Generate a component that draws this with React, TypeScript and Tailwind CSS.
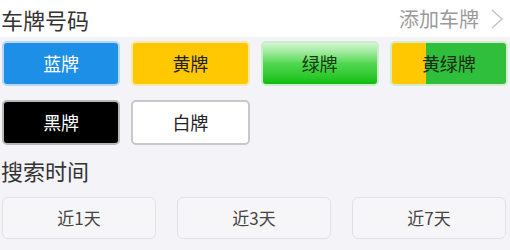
const plates = [
  { label: "蓝牌", cls: "bg-[#1e8fe6] text-white border-[#b5d8f6]" },
  { label: "黄牌", cls: "bg-[#ffc800] text-[#222] border-[#fbe7a8]" },
  {
    label: "绿牌",
    cls: "bg-gradient-to-b from-[#d2f7d2] via-[#4fd84f] to-[#06be06] text-[#143a14] border-[#cdeccd]",
  },
  {
    label: "黄绿牌",
    cls: "bg-[linear-gradient(to_right,#ffc800_0%,#ffc800_30%,#2fbf3c_30%,#2fbf3c_100%)] text-[#1b2a10] border-[#d6ecc8]",
  },
  { label: "黑牌", cls: "bg-black text-white border-[#b8b8b8]" },
  { label: "白牌", cls: "bg-white text-[#222] border-[#c8c8c8]" },
];

const days = ["近1天", "近3天", "近7天"];

const App = () => {
  return (
    <div
      className="w-[510px] h-[250px] overflow-hidden bg-[#f4f4f8]"
      style={{ fontFamily: '"Noto Sans CJK SC", "Liberation Sans", sans-serif' }}
    >
      <div className="flex items-center justify-between h-[37px] bg-white pl-[1px] pr-[6px]">
        <span className="text-[22px] leading-none text-[#333]">车牌号码</span>
        <div className="flex items-center gap-[11px] text-[#9a9a9a]">
          <span className="text-[20px] leading-none">添加车牌</span>
          <svg width="14" height="22" viewBox="0 0 14 22" fill="none">
            <path d="M2 2 L12 11 L2 20" stroke="#c4c4c4" strokeWidth="1.4" />
          </svg>
        </div>
      </div>

      <div className="grid grid-cols-4 gap-x-[11px] gap-y-[14px] pl-[2px] pr-[2px] pt-[4px]">
        {plates.map((p) => (
          <button
            key={p.label}
            className={`h-[45px] rounded-[5px] border-2 text-[18px] flex items-center justify-center ${p.cls}`}
          >
            {p.label}
          </button>
        ))}
      </div>

      <div className="pl-[1px] pt-[12px] pb-[12px]">
        <span className="text-[22px] leading-[26px] text-[#333]">搜索时间</span>
      </div>

      <div className="grid grid-cols-3 gap-x-[21px] pl-[2px] pr-[4px]">
        {days.map((d) => (
          <button
            key={d}
            className="h-[42px] rounded-[6px] border border-[#e2e2e6] bg-[#f6f6f9] text-[17px] text-[#444] flex items-center justify-center"
          >
            {d}
          </button>
        ))}
      </div>
    </div>
  );
};

export default App;
